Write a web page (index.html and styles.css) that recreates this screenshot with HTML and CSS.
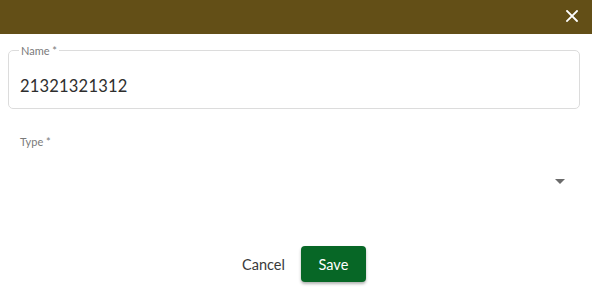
FILE: index.html
```html
<!DOCTYPE html>
<html>
<head>
<meta charset="utf-8">
<link rel="stylesheet" href="styles.css">
</head>
<body>
<div class="dialog">
  <div class="header">
    <svg class="close" width="12" height="12" viewBox="0 0 12 12"><path d="M1 1L11 11M11 1L1 11" stroke="#fff" stroke-width="1.8" stroke-linecap="square"/></svg>
  </div>
  <div class="content">
    <fieldset class="outlined">
      <legend>Name *</legend>
      <div class="value">21321321312</div>
    </fieldset>
    <div class="select">
      <div class="select-label">Type *</div>
      <div class="select-row">
        <span class="arrow"></span>
      </div>
    </div>
    <div class="actions">
      <button class="btn-text">Cancel</button>
      <button class="btn-primary">Save</button>
    </div>
  </div>
</div>
</body>
</html>
```
FILE: styles.css
```css
html, body {
  margin: 0;
  padding: 0;
  background: #fff;
  font-family: Lato, "Open Sans", sans-serif;
}
.dialog {
  width: 592px;
  height: 287px;
  display: flex;
  flex-direction: column;
}
.header {
  height: 34px;
  background: #634f17;
  display: flex;
  align-items: center;
  justify-content: flex-end;
  padding-right: 14px;
  box-sizing: border-box;
}
.close {
  display: block;
  margin-top: -3px;
}
.content {
  padding: 10px 12px 0 8px;
  display: flex;
  flex-direction: column;
}
.outlined {
  margin: 0;
  border: 1px solid #dcdcdc;
  border-radius: 5px;
  padding: 0 11px;
  height: 65px;
  box-sizing: border-box;
}
.outlined legend {
  font-size: 11px;
  color: #7a7a7a;
  padding: 0 2px;
  margin-left: -1px;
  line-height: 13px;
}
.value {
  font-size: 16.5px;
  color: #2e2e2e;
  margin-top: 19px;
  letter-spacing: 0.2px;
}
.select {
  padding: 0 0 0 12px;
  margin-top: 26px;
  height: 80px;
}
.select-label {
  font-size: 11px;
  color: #7a7a7a;
  line-height: 13px;
}
.select-row {
  display: flex;
  justify-content: flex-end;
  padding-right: 15px;
  margin-top: 31px;
}
.arrow {
  width: 0;
  height: 0;
  border-left: 5px solid transparent;
  border-right: 5px solid transparent;
  border-top: 5px solid #6b6b6b;
}
.actions {
  display: flex;
  justify-content: center;
  align-items: center;
  gap: 8px;
  margin-top: 31px;
  padding-left: 12px;
}
.btn-text {
  background: none;
  border: none;
  font-family: inherit;
  font-size: 14.5px;
  color: #3a3a3a;
  padding: 0 8px;
  height: 36px;
}
.btn-primary {
  background: #076726;
  color: #fff;
  border: none;
  border-radius: 4px;
  font-family: inherit;
  font-size: 14.5px;
  width: 65px;
  height: 36px;
  box-shadow: 0 2px 3px rgba(0,0,0,0.3);
}
```
